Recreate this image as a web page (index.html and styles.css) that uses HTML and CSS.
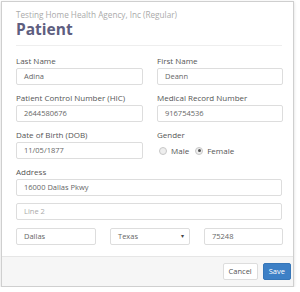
FILE: index.html
```html
<!DOCTYPE html>
<html lang="en">
	<head>
		<title>Patient</title>
		<meta charset="utf-8" />
		<link rel="stylesheet" href="styles.css">
	</head>

	<body>
		<div class="modal">
			<!-- header -->
			<div class="head">
				<div class="agency">Testing Home Health Agency, Inc (Regular)</div>
				<h1>Patient</h1>
			</div>

			<!-- form -->
			<div class="body">
				<div class="grid">
					<div class="field">
						<label>Last Name</label>
						<div class="input">Adina</div>
					</div>
					<div class="field">
						<label>First Name</label>
						<div class="input">Deann</div>
					</div>
					<div class="field">
						<label>Patient Control Number (HIC)</label>
						<div class="input">2644580676</div>
					</div>
					<div class="field">
						<label>Medical Record Number</label>
						<div class="input">916754536</div>
					</div>
					<div class="field">
						<label>Date of Birth (DOB)</label>
						<div class="input">11/05/1877</div>
					</div>
					<div class="field">
						<label>Gender</label>
						<div class="radios">
							<span class="radio"></span><span class="opt">Male</span>
							<span class="radio checked"></span><span class="opt">Female</span>
						</div>
					</div>
				</div>

				<div class="field">
					<label>Address</label>
					<div class="input">16000 Dallas Pkwy</div>
				</div>
				<div class="input line2 placeholder">Line 2</div>
				<div class="city">
					<div class="input">Dallas</div>
					<div class="input select">Texas <span class="caret">&#9662;</span></div>
					<div class="input">75248</div>
				</div>
			</div>

			<!-- buttons -->
			<div class="foot">
				<div class="btn">Cancel</div>
				<div class="btn save">Save</div>
			</div>
		</div>
	</body>
</html>
```
FILE: styles.css
```css
body {
	margin: 0;
	background: #fff;
	font-family: "Open Sans", "Liberation Sans", sans-serif;
	color: #555;
}

.modal {
	margin: 1px 0 0 1px;
	width: 293px;
	height: 286px;
	border: 1px solid #cfcfcf;
	box-shadow: 0 1px 3px rgba(0, 0, 0, 0.15);
	display: flex;
	flex-direction: column;
	box-sizing: border-box;
	background: #fff;
}

/* header */
.head {
	margin: 0 11px 0 14px;
	padding-top: 7px;
	height: 36px;
	border-bottom: 1px solid #eee;
}

.agency {
	font-size: 8.2px;
	line-height: 11px;
	color: #aaa;
}

h1 {
	margin: 0;
	font-size: 15.5px;
	line-height: 19px;
	font-weight: 700;
	color: #5e5e80;
}

/* form */
.body {
	flex: 1;
	padding: 9px 11px 0 14px;
}

.grid {
	display: grid;
	grid-template-columns: 127px 126px;
	column-gap: 14px;
}

.field {
	margin-bottom: 7px;
}

label {
	display: block;
	font-size: 8px;
	line-height: 11px;
	margin-bottom: 2px;
	color: #555;
}

.input {
	height: 17px;
	box-sizing: border-box;
	border: 1px solid #ddd;
	border-radius: 2px;
	padding-left: 7px;
	font-size: 7.5px;
	line-height: 15px;
	color: #666;
	position: relative;
}

.placeholder {
	color: #aaa;
}

.line2 {
	margin-top: 1px;
	margin-bottom: 8px;
}

.radios {
	display: flex;
	align-items: center;
	height: 17px;
	font-size: 8px;
}

.radio {
	width: 6px;
	height: 6px;
	border: 1px solid #c8c8c8;
	border-radius: 50%;
	background: #eee;
	margin: 0 4px 0 2px;
	position: relative;
}

.radio.checked::after {
	content: "";
	position: absolute;
	left: 1.5px;
	top: 1.5px;
	width: 3px;
	height: 3px;
	border-radius: 50%;
	background: #555;
}

.opt {
	margin-right: 4px;
}

.city {
	display: grid;
	grid-template-columns: 80px 80px 79px;
	column-gap: 14px;
}

.caret {
	position: absolute;
	right: 5px;
	top: 0;
	font-size: 6px;
	color: #444;
}

/* footer */
.foot {
	height: 29px;
	border-top: 1px solid #e6e6e6;
	background: #f6f6f6;
	display: flex;
	justify-content: flex-end;
	align-items: center;
	gap: 5px;
	padding-right: 2px;
}

.btn {
	height: 17px;
	line-height: 15px;
	box-sizing: border-box;
	border: 1px solid #ddd;
	border-radius: 2px;
	background: #fff;
	font-size: 7.5px;
	padding: 0 5px;
	color: #555;
}

.btn.save {
	background: #3d80c6;
	border-color: #3676b8;
	color: #fff;
}
```
